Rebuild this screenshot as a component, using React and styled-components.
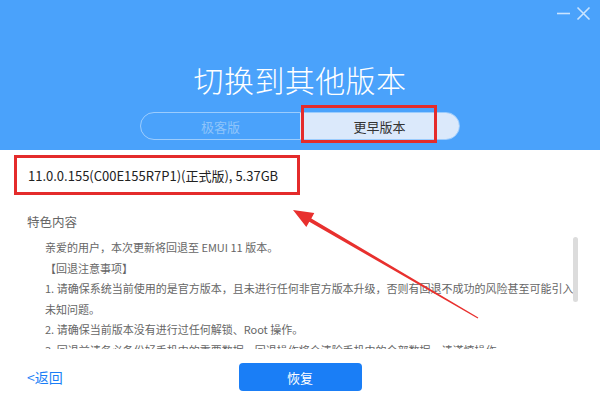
import styled, { createGlobalStyle } from "styled-components"

const GlobalStyle = createGlobalStyle`
  html, body {
    margin: 0;
    padding: 0;
    background: #ffffff;
  }
  * {
    box-sizing: border-box;
  }
`

const FONT = `"Noto Sans CJK SC", "Noto Sans", sans-serif`

const notes = [
  "亲爱的用户，本次更新将回退至 EMUI 11 版本。",
  "【回退注意事项】",
  "1. 请确保系统当前使用的是官方版本，且未进行任何非官方版本升级，否则有回退不成功的风险甚至可能引入未知问题。",
  "2. 请确保当前版本没有进行过任何解锁、Root 操作。",
  "3. 回退前请务必备份好手机中的重要数据，回退操作将会清除手机中的全部数据，请谨慎操作。",
]

function App() {
  return (
    <>
      <GlobalStyle />
      <Window>
        <Header>
          <TopBar>
            <WinButton aria-label="最小化">
              <svg width="15" height="15" viewBox="0 0 15 15">
                <path d="M1 7.5h13" stroke="currentColor" strokeWidth="1.6" />
              </svg>
            </WinButton>
            <WinButton aria-label="关闭">
              <svg width="15" height="15" viewBox="0 0 15 15">
                <path d="M1.5 1.5l12 12M13.5 1.5l-12 12" stroke="currentColor" strokeWidth="1.6" />
              </svg>
            </WinButton>
          </TopBar>
          <Title>切换到其他版本</Title>
          <Toggle>
            <Segment>极客版</Segment>
            <Segment $active>
              更早版本
              <Mark />
            </Segment>
          </Toggle>
        </Header>

        <Body>
          <VersionBox>11.0.0.155(C00E155R7P1)(正式版), 5.37GB</VersionBox>
          <SectionTitle>特色内容</SectionTitle>
          <ScrollArea>
            <Notes>
              {notes.map((line, i) => (
                <p key={i}>{line}</p>
              ))}
            </Notes>
            <Thumb />
          </ScrollArea>
          <Arrow width="600" height="410" viewBox="0 0 600 410">
            <polygon
              points="293,210 314.3,213.1 311.3,218.4 478.3,317.6 477.7,318.4 309.3,221.8 306.3,227"
              fill="#e8302e"
            />
          </Arrow>
        </Body>

        <Footer>
          <BackLink>&lt;返回</BackLink>
          <PrimaryButton>恢复</PrimaryButton>
          <span />
        </Footer>
      </Window>
    </>
  )
}

const Window = styled.div`
  position: relative;
  width: 600px;
  height: 410px;
  display: flex;
  flex-direction: column;
  background: #ffffff;
  font-family: ${FONT};
  overflow: hidden;
`

const Header = styled.div`
  height: 150px;
  background: #4aa2fb;
  display: flex;
  flex-direction: column;
  align-items: center;
`

const TopBar = styled.div`
  align-self: stretch;
  height: 26px;
  display: flex;
  justify-content: flex-end;
  align-items: center;
  gap: 5px;
  padding-right: 9px;
`

const WinButton = styled.span`
  display: flex;
  color: rgba(225, 240, 255, 0.85);
`

const Title = styled.h1`
  margin: 38px 0 0;
  font-size: 30px;
  line-height: 30px;
  font-weight: 300;
  color: #ffffff;
  letter-spacing: 0.4px;
`

const Toggle = styled.div`
  margin-top: 18px;
  width: 320px;
  height: 28px;
  border: 1px solid rgba(255, 255, 255, 0.45);
  border-radius: 14px;
  display: grid;
  grid-template-columns: 1fr 1fr;
`

const Segment = styled.div`
  position: relative;
  display: flex;
  align-items: center;
  justify-content: center;
  font-size: 13px;
  color: ${(p) => (p.$active ? "#333333" : "#8ec4fa")};
  background: ${(p) => (p.$active ? "#dbe9fb" : "transparent")};
  border-radius: ${(p) => (p.$active ? "0 14px 14px 0" : "14px 0 0 14px")};
`

const Mark = styled.span`
  position: absolute;
  left: 1px;
  top: -8px;
  width: 136px;
  height: 38px;
  border: 3px solid #e42b2b;
`

const Body = styled.div`
  position: relative;
  padding: 5px 0 0 14px;
  display: flex;
  flex-direction: column;
`

const VersionBox = styled.div`
  width: 286px;
  height: 40px;
  border: 3px solid #e42b2b;
  padding-left: 11px;
  display: flex;
  align-items: center;
  font-size: 13px;
  color: #222222;
  white-space: nowrap;
`

const SectionTitle = styled.div`
  margin: 17px 0 0 13px;
  font-size: 12.5px;
  line-height: 20px;
  color: #666666;
`

const ScrollArea = styled.div`
  position: relative;
  margin: 5px 0 0 31px;
  width: 541px;
  height: 112px;
  overflow: hidden;
`

const Notes = styled.div`
  width: 532px;
  font-size: 11px;
  line-height: 20.5px;
  color: #666666;
  p {
    margin: 0;
  }
`

const Thumb = styled.div`
  position: absolute;
  left: 528px;
  top: 0;
  width: 5px;
  height: 65px;
  border-radius: 3px;
  background: #dcdcdc;
`

const Arrow = styled.svg`
  position: absolute;
  left: 0;
  top: -150px;
  pointer-events: none;
`

const Footer = styled.div`
  margin-top: 14px;
  height: 28px;
  padding: 0 27px;
  display: grid;
  grid-template-columns: 1fr auto 1fr;
  align-items: center;
`

const BackLink = styled.a`
  font-size: 14px;
  color: #1a7ef6;
  cursor: pointer;
`

const PrimaryButton = styled.button`
  width: 123px;
  height: 28px;
  border: none;
  border-radius: 4px;
  background: #1a7ef6;
  color: #ffffff;
  font-family: ${FONT};
  font-size: 13px;
  cursor: pointer;
`

export default App
